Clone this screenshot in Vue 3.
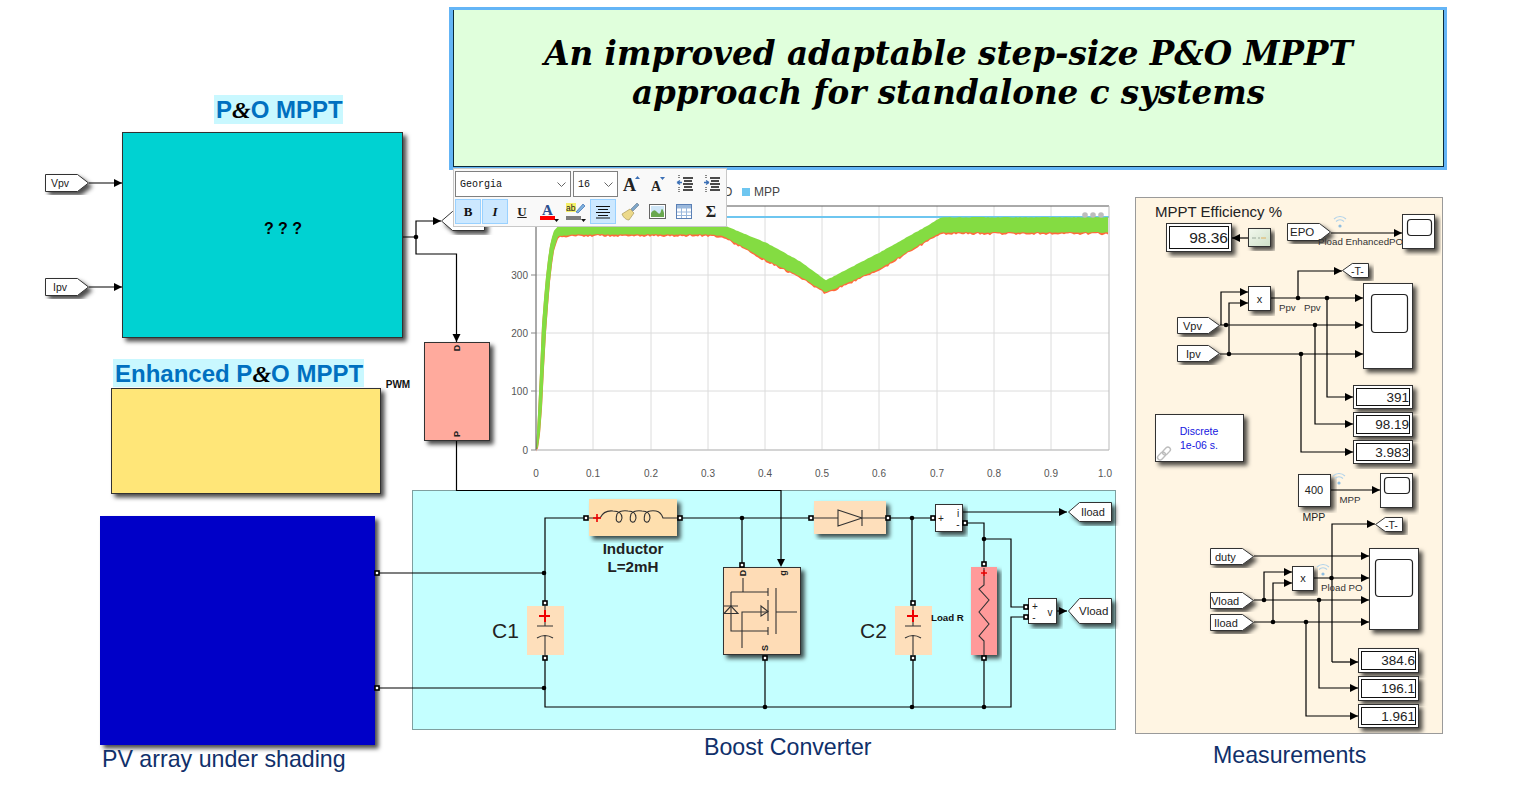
<template>
  <div class="page">
    <svg class="canvas" width="1529" height="795" viewBox="0 0 1529 795">
      <defs>
        <filter id="sh" x="-20%" y="-20%" width="140%" height="140%">
          <feDropShadow dx="3.5" dy="3.5" stdDeviation="2" flood-color="#000" flood-opacity=".7" />
        </filter>
        <linearGradient id="gain" x1="0" y1="0" x2="1" y2="1">
          <stop offset="0" stop-color="#f2f8ee" />
          <stop offset="1" stop-color="#cfe0c8" />
        </linearGradient>
      </defs>

      <!-- top labels -->
      <rect x="214" y="95" width="129" height="29" fill="#c9f8ff" />
      <text x="216" y="118" class="head">P<tspan class="amp">&amp;</tspan>O MPPT</text>
      <rect x="113" y="359" width="251" height="28" fill="#c9f8ff" />
      <text x="115" y="382" class="head">Enhanced P<tspan class="amp">&amp;</tspan>O MPPT</text>

      <!-- panels -->
      <rect x="412.5" y="490.5" width="703" height="239" fill="#c4ffff" stroke="#7f9f9f" />
      <rect x="1135.5" y="197.5" width="307" height="536" fill="#fff5e3" stroke="#9a9a9a" />

      <!-- chart -->
      <text x="754" y="196" class="leg">MPP</text>
      <text x="715" y="196" class="leg">PO</text>
      <rect x="742" y="188" width="8" height="8" fill="#6ec6f0" />
      <g stroke="#dcdcdc">
        <line v-for="v in gridX" :key="v" :x1="v" :x2="v" y1="206" y2="450" />
        <line v-for="t in gridY" :key="t.y" x1="536" x2="1109" :y1="t.y" :y2="t.y" />
      </g>
      <line x1="536" x2="1109" y1="217" y2="217" stroke="#6ec6f0" stroke-width="2" />
      <path :d="orangeBand" fill="#ff6a3c" />
      <path :d="greenBand" fill="#84dc42" />
      <path d="M536 206H1109M536 206V450" fill="none" stroke="#555" />
      <path d="M536 450H1109M1109 206V450" fill="none" stroke="#bbb" />
      <g stroke="#888">
        <line v-for="t in gridY" :key="t.label" x1="531" x2="536" :y1="t.y" :y2="t.y" />
      </g>
      <text v-for="t in xTicks" :key="t.label" :x="t.tx" y="477" class="tick" text-anchor="middle">{{ t.label }}</text>
      <text v-for="t in gridY" :key="t.label" x="528" :y="t.y + 3.5" class="tick" text-anchor="end">{{ t.label }}</text>
      <g fill="#bdbdbd">
        <circle cx="1085" cy="215" r="2.8" /><circle cx="1093" cy="215" r="2.8" /><circle cx="1101" cy="215" r="2.8" />
      </g>

      <!-- wires -->
      <polyline v-for="(w, i) in wires" :key="i" :points="w" class="wire" />
      <circle v-for="(j, i) in junctions" :key="i" :cx="j[0]" :cy="j[1]" r="2.3" fill="#000" />
      <polygon v-for="(a, i) in arrows" :key="i" :points="arrowPoints(a)" fill="#000" />

      <!-- blocks -->
      <rect v-for="b in blocks" :key="b.id" :x="b.x + .5" :y="b.y + .5" :width="b.w - 1" :height="b.h - 1" :fill="b.fill" :stroke="b.stroke || '#333'" filter="url(#sh)" />
      <path d="M1252 238h4M1258 238h2" stroke="#9aa89a" fill="none" />
      <path d="M1261 238h5" stroke="#e0b060" fill="none" />

      <!-- tags -->
      <polygon v-for="t in tags" :key="t.id" :points="tagPoints(t)" fill="#fff" stroke="#333" filter="url(#sh)" />
      <text v-for="t in tags" :key="t.id" :x="t.tx" :y="t.y + t.h / 2 + 4" class="lbl" :font-size="t.fs || 11">{{ t.label }}</text>

      <!-- scopes -->
      <g v-for="s in scopes" :key="s.x">
        <rect :x="s.x + .5" :y="s.y + .5" :width="s.w - 1" :height="s.h - 1" fill="#fff" stroke="#333" filter="url(#sh)" />
        <rect :x="s.sx + .5" :y="s.sy + .5" :width="s.sw" :height="s.sh" rx="3.5" fill="#fff" stroke="#222" stroke-width="1.2" />
      </g>

      <!-- numeric displays -->
      <g v-for="d in displays" :key="d.label">
        <rect :x="d.x + .5" :y="d.y + .5" :width="d.w - 1" :height="d.h - 1" fill="#fff" stroke="#333" filter="url(#sh)" />
        <rect :x="d.x + 3.5" :y="d.y + 3.5" :width="d.w - 7" :height="d.h - 7" fill="#fff" stroke="#111" />
        <text :x="d.x + d.w - 4" :y="d.y + d.h / 2 + (d.fs || 13.5) / 2.8" class="lbl" text-anchor="end" :font-size="d.fs || 13.5">{{ d.label }}</text>
      </g>

      <!-- block symbols -->
      <text x="283" y="234" class="q" text-anchor="middle">? ? ?</text>
      <text x="398" y="388" class="tiny" text-anchor="middle">PWM</text>
      <text class="rot" transform="translate(457 348) rotate(-90)" text-anchor="middle" dy="3.2">D</text>
      <text class="rot" transform="translate(457 434) rotate(-90)" text-anchor="middle" dy="3.2">P</text>

      <path d="M589 518H600Q604 510 613 511Q622 511 622 518Q621 523 618 522Q615 521 617 514Q620 510 628 511Q636 511 636 518Q635 523 632 522Q629 521 631 514Q634 510 642 511Q650 511 650 518Q649 523 646 522Q643 521 645 514Q648 510 656 511Q661 512 663 518H677" class="sym" />
      <path d="M593 518h8M597 514v8" stroke="#e00" stroke-width="1.6" fill="none" />
      <text x="633" y="554" class="ind" text-anchor="middle">Inductor</text>
      <text x="633" y="572" class="ind" text-anchor="middle">L=2mH</text>

      <g v-for="c in caps" :key="c.x">
        <rect :x="c.x - 18" y="606" width="37" height="49" fill="#fedfbb" />
        <path :d="`M${c.x} 606V626M${c.x - 8} 626H${c.x + 8}M${c.x - 8} 638Q${c.x} 633 ${c.x + 8} 638M${c.x} 636V655`" class="sym" />
        <path :d="`M${c.x - 6} 616H${c.x + 5}M${c.x} 610V622`" stroke="#e00" stroke-width="2" fill="none" />
        <text :x="c.tx" y="638" class="cap">{{ c.label }}</text>
      </g>
      <text x="931" y="621" class="tiny load">Load R</text>

      <path d="M743 578V592M731 592H768M768 588V596M731 592V631H768M768 627V635M742 648V612H768M768 600V621M776 588V634M776 612H797M723 606H738" class="sym" />
      <path d="M731 606L724 613.5H738ZM761 606L768 611.5L761 616Z" class="sym" />
      <text class="rot" transform="translate(743 573) rotate(-90)" text-anchor="middle" dy="3.2">D</text>
      <text class="rot" transform="translate(783 573) rotate(-90)" text-anchor="middle" dy="3.2">g</text>
      <text class="rot" transform="translate(765 648) rotate(-90)" text-anchor="middle" dy="3.2">S</text>

      <path d="M814 518H838M862 518H886M838 510V526L862 518ZM862 510V526" class="sym" />
      <path d="M984 568V585L979 589L989 600L979 612L989 624L979 636L984 641V655" class="sym" />
      <path d="M981 573h6M984 570v6" stroke="#e00" stroke-width="1.3" fill="none" />

      <g class="meas">
        <text x="941" y="522" text-anchor="middle">+</text>
        <text x="958" y="517" text-anchor="middle">i</text>
        <text x="958" y="528" text-anchor="middle">-</text>
        <text x="1035" y="610" text-anchor="middle">+</text>
        <text x="1034" y="621" text-anchor="middle">-</text>
        <text x="1050" y="616" text-anchor="middle">v</text>
      </g>

      <rect v-for="(p, i) in ports" :key="i" :x="p[0] - 2" :y="p[1] - 2" width="4" height="4" fill="#fff" stroke="#000" stroke-width="1.6" />

      <!-- measurement panel texts -->
      <text x="1155" y="217" class="lbl" font-size="15">MPPT Efficiency %</text>
      <text x="1259.5" y="303" class="lbl" text-anchor="middle">x</text>
      <text x="1303" y="582" class="lbl" text-anchor="middle">x</text>
      <text x="1318" y="245" class="small">Pload EnhancedPO</text>
      <text x="1279" y="311" class="small">Ppv</text>
      <text x="1304" y="311" class="small">Ppv</text>
      <text x="1321" y="591" class="small">Pload PO</text>
      <text x="1350" y="503" class="small" text-anchor="middle">MPP</text>
      <text x="1314" y="521" class="lbl" font-size="10.5" text-anchor="middle">MPP</text>
      <text x="1314" y="494" class="lbl" text-anchor="middle">400</text>
      <text x="1199" y="435" class="disc" text-anchor="middle">Discrete</text>
      <text x="1199" y="449" class="disc" text-anchor="middle">1e-06 s.</text>
      <g transform="rotate(-45 1164 453.5)" fill="none" stroke="#bdbdbd" stroke-width="1.4">
        <rect x="1156" y="451" width="9" height="5" rx="2.5" />
        <rect x="1163" y="451" width="9" height="5" rx="2.5" />
      </g>
      <g v-for="w in wifis" :key="w[0]" fill="none" stroke="#b3d3ea" stroke-width="1.1">
        <path :d="`M${w[0] - 6} ${w[1] - 5}a8.5 8.5 0 0 1 12 0M${w[0] - 4} ${w[1] - 2.5}a5.5 5.5 0 0 1 8 0`" />
        <circle :cx="w[0]" :cy="w[1] + 2" r="1.6" fill="#8fbde0" stroke="none" />
      </g>

      <!-- captions -->
      <text x="102" y="767" class="caption">PV array under shading</text>
      <text x="704" y="755" class="caption">Boost Converter</text>
      <text x="1213" y="763" class="caption">Measurements</text>
    </svg>

    <div class="title">
      <p>An improved adaptable step-size P&amp;O MPPT</p>
      <p>approach for standalone c systems</p>
    </div>

    <div class="toolbar">
      <div class="row">
        <div class="select font">Georgia<svg width="9" height="5" viewBox="0 0 9 5"><path d="M.5 .5L4.5 4.5L8.5 .5" fill="none" stroke="#666" /></svg></div>
        <div class="select size">16<svg width="9" height="5" viewBox="0 0 9 5"><path d="M.5 .5L4.5 4.5L8.5 .5" fill="none" stroke="#666" /></svg></div>
        <button class="tb"><svg width="20" height="20" viewBox="0 0 20 20"><text x="1" y="17" class="ico-a big">A</text><path d="M13 5L15.5 2L18 5Z" fill="#3b6fb5" /></svg></button>
        <button class="tb"><svg width="18" height="18" viewBox="0 0 18 18"><text x="2" y="16" class="ico-a">A</text><path d="M11 2H16L13.5 5Z" fill="#3b6fb5" /></svg></button>
        <button class="tb"><svg width="18" height="18" viewBox="0 0 18 18"><path d="M7 3H17M8 6H16M7 9H17M8 12H16M7 15H17" stroke="#111" stroke-width="1.4" /><path d="M3 0V3M3 12V17" stroke="#111" stroke-dasharray="1 1" /><path d="M1 7.5H6M1 7.5L4 5.5M1 7.5L4 9.5" stroke="#3b6fb5" stroke-width="1.4" fill="none" /></svg></button>
        <button class="tb"><svg width="18" height="18" viewBox="0 0 18 18"><path d="M7 3H17M8 6H16M7 9H17M8 12H16M7 15H17" stroke="#111" stroke-width="1.4" /><path d="M3 0V3M3 12V17" stroke="#111" stroke-dasharray="1 1" /><path d="M1 7.5H6M6 7.5L3 5.5M6 7.5L3 9.5" stroke="#3b6fb5" stroke-width="1.4" fill="none" /></svg></button>
      </div>
      <div class="row">
        <button class="tb on"><span class="b">B</span></button>
        <button class="tb on"><span class="i">I</span></button>
        <button class="tb"><span class="u">U</span></button>
        <button class="tb"><svg width="20" height="20" viewBox="0 0 20 20"><text x="3" y="13" class="ico-a blue">A</text><rect x="1" y="14" width="15" height="4" fill="#f00" /><path d="M15 17H20L17.5 20Z" fill="#111" /></svg></button>
        <button class="tb"><svg width="20" height="20" viewBox="0 0 20 20"><rect x="0" y="1" width="10" height="9" fill="#f5f06a" /><text x="0" y="9" class="ab">ab</text><path d="M10 10L17 2L19 4L12 11Z" fill="#7fb2dd" stroke="#3b6fb5" stroke-width=".7" /><rect x="0" y="14" width="15" height="4" fill="#7d7d7d" /><path d="M15 17H20L17.5 20Z" fill="#111" /></svg></button>
        <button class="tb on"><svg width="16" height="14" viewBox="0 0 16 14"><path d="M1 1.5H15M3 4.5H13M1 7.5H15M3 10.5H13M1 13H15" stroke="#111" stroke-width="1.1" /></svg></button>
        <button class="tb"><svg width="20" height="20" viewBox="0 0 20 20"><path d="M11 7L17 1L19 3L13 9Z" fill="#7fa6c9" stroke="#567" stroke-width=".5" /><path d="M10 7L14 11L9 18C6 18 3 15 2 12Z" fill="#ecd98a" stroke="#9a8a4a" stroke-width=".6" /></svg></button>
        <button class="tb"><svg width="17" height="15" viewBox="0 0 17 15"><rect x=".5" y=".5" width="16" height="14" fill="#fff" stroke="#666" /><rect x="2" y="2" width="13" height="11" fill="#cfe6f7" /><path d="M2 13V9Q5 4 8 8T12 7T15 9V13Z" fill="#6aa84f" /></svg></button>
        <button class="tb"><svg width="16" height="15" viewBox="0 0 16 15"><rect x=".5" y=".5" width="15" height="14" fill="#fff" stroke="#5b80b5" /><rect x="1" y="1" width="14" height="3.5" fill="#9ab8dc" /><path d="M1 8H15M1 11.5H15M5.5 4V14M10.5 4V14" stroke="#9ab8dc" /></svg></button>
        <button class="tb"><span class="sig">Σ</span></button>
      </div>
    </div>
  </div>
</template>

<script setup>
const gridX = [593, 651, 708, 765, 822, 879, 937, 994, 1051]
const gridY = [
  { y: 450, label: '0' },
  { y: 391, label: '100' },
  { y: 333, label: '200' },
  { y: 275, label: '300' }
]
const xTicks = ['0', '0.1', '0.2', '0.3', '0.4', '0.5', '0.6', '0.7', '0.8', '0.9', '1.0'].map((label, i) => {
  const x = i === 10 ? 1109 : gridX[i - 1] || 536
  return { label, x, tx: i === 10 ? 1105 : x }
})

// envelope of the power trace: [x, upper y, lower y]
const envelope = [
  [536, 450, 450], [539, 395, 445], [542, 325, 405], [545, 285, 345], [549, 250, 290], [553, 232, 252],
  [558, 226, 236], [575, 226, 234], [700, 226, 234], [722, 224, 235], [767, 243, 260], [800, 261, 276],
  [826, 280, 292], [880, 252, 268], [930, 224, 238], [941, 217, 232], [1109, 217, 232]
]

function lerp(x, idx) {
  for (let i = 1; i < envelope.length; i++) {
    const a = envelope[i - 1]
    const b = envelope[i]
    if (x <= b[0]) return a[idx] + (b[idx] - a[idx]) * (x - a[0]) / (b[0] - a[0])
  }
  return envelope[envelope.length - 1][idx]
}

function noise(x, s) {
  const v = Math.sin(x * 12.9898 + s) * 43758.5453
  return v - Math.floor(v)
}

function band(offset, amount) {
  let top = ''
  let bottom = ''
  for (let x = 536; x <= 1109; x += 2) {
    const up = lerp(x, 1) + noise(x, 1) * amount * 0.5 + (offset ? 1 : 0)
    const lo = lerp(x, 2) + noise(x, 2) * amount + offset
    top += (top ? 'L' : 'M') + x + ' ' + up.toFixed(1)
    bottom = 'L' + x + ' ' + lo.toFixed(1) + bottom
  }
  return top + bottom + 'Z'
}
const orangeBand = band(1, 2.2)
const greenBand = band(0, 1)

const wires = [
  '89,183 122,183', '89,287 122,287',
  '403,237 416,237 416,221 441,221', '416,237 416,254 456.5,254 456.5,342',
  '456.5,441 456.5,490.5 781,490.5 781,562',
  '377,573 544,573', '377,688 544,688',
  '545,603 545,518 586,518', '680,518 811,518', '742,518 742,565',
  '545,658 545,707 1011,707 1011,617 1026,617', '765,658 765,707',
  '888,518 933,518', '912,518 912,603', '913,658 913,707',
  '965,523 984,523 984,564', '984,539 1011,539 1011,607 1026,607', '984,658 984,707',
  '963,512 1067,512', '1057,611 1067,611',
  // measurements, top group
  '1248,238 1232,238', '1331,233 1402,233',
  '1298,298 1298,271 1342,271', '1271,298 1363,298',
  '1221,325 1221,292 1248,292', '1229,354 1229,303 1248,303',
  '1220,325 1363,325', '1220,354 1363,354',
  '1327,298 1327,397 1353,397', '1315,325 1315,424 1353,424', '1301,354 1301,452 1353,452',
  // measurements, bottom group
  '1331,490 1380,490', '1332,662 1332,524 1375,524', '1254,556 1369,556', '1314,578 1369,578',
  '1254,600 1369,600', '1254,622 1369,622', '1264,600 1264,572 1292,572', '1273,622 1273,583 1292,583',
  '1332,662 1358,662', '1319,600 1319,688 1358,688', '1306,622 1306,716 1358,716'
]
const junctions = [
  [416, 237], [544, 573], [544, 688], [742, 518], [765, 707], [912, 518], [912, 707], [984, 539], [984, 707],
  [1298, 298], [1327, 298], [1226, 325], [1315, 325], [1229, 354], [1301, 354],
  [1331.5, 578], [1264, 600], [1319, 600], [1273, 622], [1306, 622]
]
const arrows = [
  [122, 183, 'r'], [122, 287, 'r'], [441, 221, 'r'], [456.5, 342, 'd'], [781, 567, 'd'],
  [1067, 512, 'r'], [1067, 611, 'r'],
  [1232, 238, 'l'], [1402, 233, 'r'], [1342, 271, 'r'], [1248, 292, 'r'], [1248, 303, 'r'],
  [1363, 298, 'r'], [1363, 325, 'r'], [1363, 354, 'r'], [1353, 397, 'r'], [1353, 424, 'r'], [1353, 452, 'r'],
  [1380, 490, 'r'], [1375, 524, 'r'], [1292, 572, 'r'], [1292, 583, 'r'],
  [1369, 556, 'r'], [1369, 578, 'r'], [1369, 600, 'r'], [1369, 622, 'r'],
  [1358, 662, 'r'], [1358, 688, 'r'], [1358, 716, 'r']
]
function arrowPoints([x, y, dir]) {
  if (dir === 'r') return `${x},${y} ${x - 8},${y - 4} ${x - 8},${y + 4}`
  if (dir === 'l') return `${x},${y} ${x + 8},${y - 4} ${x + 8},${y + 4}`
  return `${x},${y} ${x - 4},${y - 8} ${x + 4},${y - 8}`
}

const blocks = [
  { id: 'po', x: 122, y: 132, w: 281, h: 206, fill: '#00d2d2' },
  { id: 'epo', x: 111, y: 388, w: 270, h: 106, fill: '#ffe678' },
  { id: 'pv', x: 100, y: 516, w: 275, h: 229, fill: '#0000c8', stroke: '#0000c8' },
  { id: 'pwm', x: 424, y: 342, w: 66, h: 99, fill: '#ffaa9d' },
  { id: 'ind', x: 589, y: 499, w: 88, h: 37, fill: '#fedfae', stroke: '#fedfae' },
  { id: 'mos', x: 723, y: 567, w: 78, h: 88, fill: '#fedcb6' },
  { id: 'dio', x: 814, y: 501, w: 72, h: 33, fill: '#fedfbb', stroke: '#fedfbb' },
  { id: 'imeas', x: 935, y: 504, w: 28, h: 28, fill: '#fff' },
  { id: 'res', x: 971, y: 567, w: 26, h: 88, fill: '#ff9a9a', stroke: '#ff9a9a' },
  { id: 'vmeas', x: 1028, y: 598, w: 29, h: 26, fill: '#fff' },
  { id: 'gain', x: 1248, y: 228, w: 23, h: 19, fill: 'url(#gain)' },
  { id: 'prod1', x: 1248, y: 286, w: 23, h: 25, fill: '#fff' },
  { id: 'prod2', x: 1292, y: 566, w: 22, h: 25, fill: '#fff' },
  { id: 'solver', x: 1155, y: 414, w: 89, h: 48, fill: '#fff' },
  { id: 'const', x: 1298, y: 474, w: 33, h: 33, fill: '#fff' }
]

const tags = [
  { id: 'v1', x: 45, y: 174, w: 44, h: 18, dir: 'r', label: 'Vpv', tx: 51, fs: 10.5 },
  { id: 'i1', x: 45, y: 278, w: 44, h: 18, dir: 'r', label: 'Ipv', tx: 53, fs: 10.5 },
  { id: 'd1', x: 441, y: 211, w: 44, h: 20, dir: 'l', label: '', tx: 460 },
  { id: 'il', x: 1068, y: 502, w: 44, h: 20, dir: 'l', label: 'Iload', tx: 1081, fs: 11 },
  { id: 'vl', x: 1068, y: 598, w: 44, h: 26, dir: 'l', label: 'Vload', tx: 1079, fs: 11.5 },
  { id: 'epo', x: 1287, y: 223, w: 44, h: 18, dir: 'r', label: 'EPO', tx: 1290, fs: 11.5 },
  { id: 't1', x: 1342, y: 263, w: 27, h: 15, dir: 'l', label: '-T-', tx: 1351, fs: 10.5 },
  { id: 'v2', x: 1177, y: 317, w: 43, h: 17, dir: 'r', label: 'Vpv', tx: 1183, fs: 11 },
  { id: 'i2', x: 1177, y: 345, w: 43, h: 17, dir: 'r', label: 'Ipv', tx: 1186, fs: 11 },
  { id: 't2', x: 1375, y: 517, w: 28, h: 15, dir: 'l', label: '-T-', tx: 1385, fs: 10.5 },
  { id: 'duty', x: 1210, y: 548, w: 44, h: 17, dir: 'r', label: 'duty', tx: 1215, fs: 11 },
  { id: 'v3', x: 1210, y: 592, w: 44, h: 17, dir: 'r', label: 'Vload', tx: 1211, fs: 11 },
  { id: 'i3', x: 1210, y: 614, w: 44, h: 17, dir: 'r', label: 'Iload', tx: 1214, fs: 11 }
]
function tagPoints({ x, y, w, h, dir }) {
  const n = Math.min(h * 0.65, 11)
  const l = x + .5
  const r = x + w - .5
  const t = y + .5
  const b = y + h - .5
  const m = y + h / 2
  if (dir === 'r') return `${l},${t} ${r - n},${t} ${r},${m} ${r - n},${b} ${l},${b}`
  return `${l},${m} ${l + n},${t} ${r},${t} ${r},${b} ${l + n},${b}`
}

const scopes = [
  { x: 1402, y: 214, w: 33, h: 35, sx: 1407, sy: 219, sw: 24, sh: 16 },
  { x: 1363, y: 283, w: 50, h: 86, sx: 1371, sy: 294, sw: 36, sh: 38 },
  { x: 1380, y: 473, w: 33, h: 35, sx: 1384, sy: 477, sw: 25, sh: 16 },
  { x: 1369, y: 548, w: 50, h: 82, sx: 1375, sy: 559, sw: 37, sh: 37 }
]

const displays = [
  { x: 1166, y: 223, w: 66, h: 29, label: '98.36', fs: 15.5 },
  { x: 1353, y: 385, w: 60, h: 24, label: '391' },
  { x: 1353, y: 412, w: 60, h: 25, label: '98.19' },
  { x: 1353, y: 440, w: 60, h: 24, label: '3.983' },
  { x: 1358, y: 648, w: 61, h: 25, label: '384.6' },
  { x: 1358, y: 676, w: 61, h: 25, label: '196.1' },
  { x: 1358, y: 704, w: 61, h: 24, label: '1.961' }
]

const caps = [
  { x: 545, tx: 492, label: 'C1' },
  { x: 913, tx: 860, label: 'C2' }
]

const ports = [
  [377, 573], [377, 688], [586, 518], [680, 518], [545, 603], [545, 658], [742, 565], [765, 658],
  [811, 518], [888, 518], [913, 603], [913, 658], [933, 518], [965, 523], [984, 564], [984, 658],
  [1026, 607], [1026, 617]
]
const wifis = [[1340, 224], [1339, 481], [1323, 572]]
</script>

<style scoped>
.page { position: relative; width: 1529px; height: 795px; overflow: hidden; background: #fff; }
.canvas { display: block; font-family: "Liberation Sans", Arial, sans-serif; font-size: 11px; }
.head { font-size: 24px; font-weight: 700; fill: #0070c0; }
.amp { font-family: "Liberation Serif", serif; font-style: italic; fill: #000; }
.leg { font-size: 12px; fill: #444; }
.tick { font-size: 10px; fill: #555; }
.wire { fill: none; stroke: #000; stroke-width: 1.2; }
.sym { fill: none; stroke: #333; stroke-width: 1.1; }
.q { font-size: 16px; font-weight: 700; fill: #000; }
.tiny { font-size: 10px; font-weight: 700; fill: #111; }
.tiny.load { font-size: 9.7px; }
.rot { font-size: 9px; font-weight: 700; fill: #222; }
.ind { font-size: 15.2px; font-weight: 700; fill: #222; }
.cap { font-size: 21px; fill: #222; }
.meas { font-size: 10px; fill: #222; }
.lbl { fill: #222; }
.small { font-size: 9.7px; fill: #333; }
.disc { font-size: 10.5px; fill: #1515e0; }
.caption { font-size: 23.2px; fill: #10306a; }

.title {
  position: absolute; left: 449px; top: 7px; width: 998px; height: 163px; box-sizing: border-box;
  border-style: solid; border-color: #64b5f6; border-width: 3px 3px 3px 4px;
  background: #e0ffdc; box-shadow: inset 1px -1px 0 #0a2a3a, inset -1px 0 0 #0a2a3a;
  padding-top: 24px;
  font-family: "DejaVu Serif", serif; font-weight: 700; font-style: italic; font-size: 32.6px; line-height: 39px;
  text-align: center; color: #000;
}
.title p { margin: 0; }

.toolbar {
  position: absolute; left: 453px; top: 168px; width: 274px; height: 59px; box-sizing: border-box;
  background: #f9f9f9; border: 1px solid #c8c8c8; padding: 2px 1px;
  display: flex; flex-direction: column; gap: 2px;
}
.row { display: flex; align-items: center; gap: 1px; height: 26px; }
.select {
  box-sizing: border-box; height: 26px; background: #fff; border: 1px solid #808080;
  font-family: "Liberation Mono", monospace; font-size: 10px; color: #111;
  display: flex; align-items: center; justify-content: space-between; padding: 0 4px;
}
.select.font { width: 117px; margin-right: 1px; }
.select.size { width: 45px; margin-right: 0; }
.tb {
  box-sizing: border-box; width: 26px; height: 25px; padding: 0; background: none; border: 1px solid transparent;
  display: flex; align-items: center; justify-content: center; font-family: "Liberation Serif", serif;
}
.tb.on { background: #cce8ff; border-color: #99d1ff; }
.b { font-weight: 700; font-size: 13px; color: #111; }
.i { font-style: italic; font-size: 13px; color: #111; font-weight: 700; }
.u { font-weight: 700; font-size: 13px; text-decoration: underline; color: #222; }
.sig { font-weight: 700; font-size: 16px; color: #222; }
.ico-a { font-family: "Liberation Serif", serif; font-weight: 700; font-size: 14px; fill: #222; }
.ico-a.big { font-size: 18px; }
.ico-a.blue { fill: #2a4f8f; font-size: 15px; }
.ab { font-family: "Liberation Sans", sans-serif; font-size: 8.5px; fill: #222; }
</style>

<style>
html, body { margin: 0; background: #fff; overflow: hidden; }
</style>
